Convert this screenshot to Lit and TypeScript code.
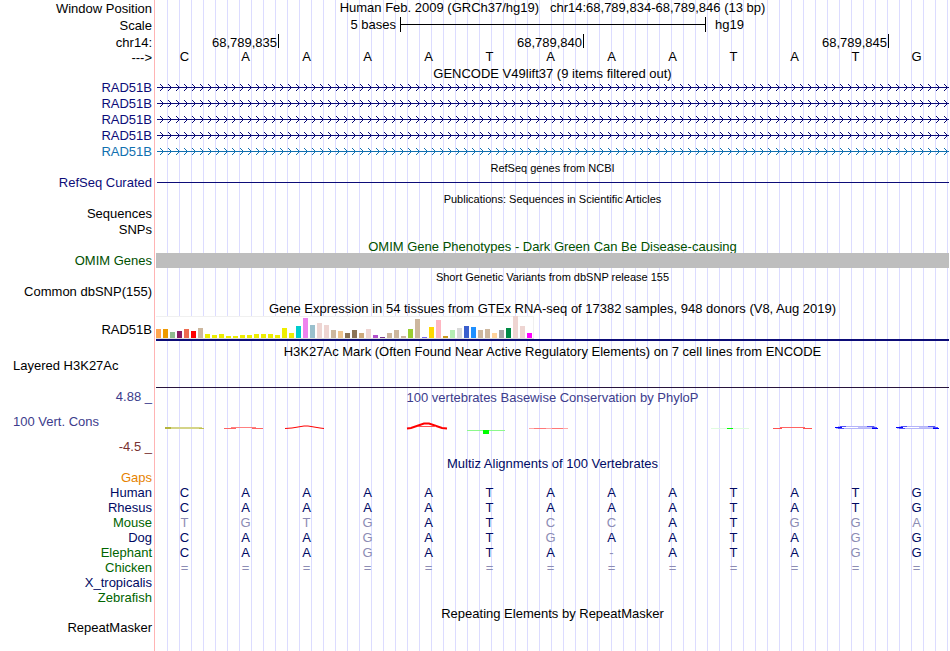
import { LitElement, html, svg, css, nothing, TemplateResult } from "lit";
import { customElement } from "lit/decorators.js";
import { classMap } from "lit/directives/class-map.js";
import { styleMap } from "lit/directives/style-map.js";

const REFERENCE = "CAAAATAAATATG";

const ALIGNMENTS: { name: string; tone: string; bases: string }[] = [
  { name: "Human", tone: "deep", bases: "CAAAATAAATATG" },
  { name: "Rhesus", tone: "deep", bases: "CAAAATAAATATG" },
  { name: "Mouse", tone: "green", bases: "TGTGATCCATGGA" },
  { name: "Dog", tone: "deep", bases: "CAAGATGAATAGG" },
  { name: "Elephant", tone: "green", bases: "CAAGATA-ATAGG" },
  { name: "Chicken", tone: "green", bases: "=============" },
  { name: "X_tropicalis", tone: "deep", bases: "" },
  { name: "Zebrafish", tone: "green", bases: "" },
];

/* Median expression per tissue: bar height and tissue colour. */
const TISSUES: [number, string][] = [
  [9, "#ffa54f"], [9, "#ee9a00"], [6, "#8fbc8f"], [7, "#8b1c62"], [9, "#ee6a50"],
  [7, "#ff0000"], [10, "#cdb79e"], [4, "#eeee00"], [3, "#eeee00"], [4, "#eeee00"],
  [2, "#eeee00"], [2, "#eeee00"], [3, "#eeee00"], [3, "#eeee00"], [4, "#eeee00"],
  [4, "#eeee00"], [4, "#eeee00"], [3, "#eeee00"], [10, "#eeee00"], [5, "#eeee00"],
  [12, "#00cdcd"], [20, "#ee82ee"], [13, "#9ac0cd"], [15, "#eed5d2"], [13, "#eed5d2"],
  [8, "#cdb79e"], [7, "#eec591"], [5, "#8b7355"], [8, "#8b7355"], [5, "#cdaa7d"],
  [9, "#eed5d2"], [3, "#b452cd"], [1, "#7a378b"], [5, "#cdb79e"], [8, "#cdb79e"],
  [2, "#cdb79e"], [9, "#9acd32"], [19, "#cdb79e"], [1, "#7a67ee"], [11, "#ffd700"],
  [18, "#ffb6c1"], [2, "#cd9b1d"], [8, "#b4eeb4"], [10, "#d9d9d9"], [12, "#3a5fcd"],
  [11, "#1e90ff"], [8, "#cdb79e"], [9, "#cdb79e"], [5, "#ffd39b"], [8, "#a6a6a6"],
  [10, "#008b45"], [22, "#eed5d2"], [12, "#eed5d2"], [5, "#ff00ff"],
];

const FLAT_G = svg`
  <rect x="11" y="22" width="37" height="1" fill="#b4b4fa"/>
  <rect x="13" y="22" width="6" height="1" fill="#5050f8"/>
  <rect x="40" y="22" width="7" height="1" fill="#5050f8"/>
  <rect x="8" y="23" width="7" height="1" fill="#0000ff"/>
  <rect x="15" y="23" width="16" height="1" fill="#ffffff"/>
  <rect x="31" y="23" width="14" height="1" fill="#c4c4fa"/>
  <rect x="45" y="23" width="5" height="1" fill="#5050f8"/>
  <rect x="9" y="24" width="36" height="1" fill="#b4b4fa"/>
  <rect x="11" y="24" width="6" height="1" fill="#5050f8"/>
  <rect x="45" y="24" width="6" height="1" fill="#0000ff"/>`;

/* Letter shapes squashed to their conservation score, one per base. */
const CONSERVATION: Record<number, TemplateResult> = {
  0: svg`
    <rect x="10" y="23" width="36" height="1" fill="#d4d488"/>
    <rect x="10" y="24" width="38" height="1" fill="#d4d488"/>
    <rect x="9" y="23" width="6" height="2" fill="#b4b43c"/>
    <rect x="43" y="24" width="5" height="1" fill="#c0c050"/>`,
  1: svg`
    <rect x="7" y="24" width="12" height="1" fill="#ff6464"/>
    <rect x="14" y="23" width="25" height="1" fill="#ff8080"/>
    <rect x="35" y="24" width="11" height="1" fill="#ff6464"/>`,
  2: svg`<path d="M7 24.5 L14 24 L26 22 L30 22 L42 24 L46 24.5" fill="none" stroke="#ff0000"/>`,
  4: svg`
    <path d="M7 24.5 L11 24 L24 19.5 L29 19.5 L42 24 L47 24.5" fill="none" stroke="#ff0000" stroke-width="2"/>
    <path d="M18 22.5 H36" stroke="#ff5050"/>`,
  5: svg`
    <rect x="6" y="26" width="38" height="1" fill="#8cf88c"/>
    <rect x="22" y="26" width="6" height="4" fill="#00ff00"/>`,
  6: svg`
    <rect x="7" y="24" width="39" height="1" fill="#ffa8a8"/>
    <rect x="12" y="24" width="12" height="1" fill="#ff7878"/>
    <rect x="30" y="24" width="11" height="1" fill="#ff7878"/>`,
  9: svg`
    <rect x="6" y="24" width="38" height="1" fill="#e0fbe0"/>
    <rect x="22" y="24" width="6" height="1" fill="#00ff00"/>`,
  10: svg`
    <rect x="7" y="24" width="9" height="1" fill="#ff5050"/>
    <rect x="14" y="23" width="25" height="1" fill="#ff6464"/>
    <rect x="37" y="24" width="9" height="1" fill="#ff5050"/>`,
  11: FLAT_G,
  12: FLAT_G,
};

@customElement("app-root")
export class AppRoot extends LitElement {
  static styles = css`
    :host {
      display: block;
      font: 13px/15px "Liberation Sans", Arial, Helvetica, sans-serif;
      color: #000;
    }
    .board {
      min-height: 100vh;
      box-sizing: border-box;
      padding-right: 1px;
      overflow: hidden;
      background:
        linear-gradient(to right, #fff 154px, #ffb4b4 154px, #ffb4b4 155px, #fff 155px) 0 0 / 156px 100% no-repeat,
        linear-gradient(to right, #dcdcff 1px, transparent 1px) 167px 0 / 12px 100%;
    }
    .row {
      display: grid;
      grid-template-columns: 152px minmax(0, 1fr);
      column-gap: 4px;
      height: 16px;
    }
    .row.h15 { height: 15px; }
    .row.h17 { height: 17px; }
    .label { text-align: right; white-space: pre; }
    .label.low, .low { line-height: 17px; }
    .label.start { text-align: left; padding-left: 13px; }
    .title { text-align: center; white-space: pre; }
    .title.band { line-height: 17px; }
    .title.small { font-size: 11px; line-height: 17px; }

    .navy { color: #0c0c78; }
    .deep { color: #000a64; }
    .sky { color: #1070b0; }
    .green { color: #006400; }
    .forest { color: #005000; }
    .orange { color: #e68200; }
    .indigo { color: #3c3c8c; }
    .maroon { color: #783232; }

    .scale { display: grid; grid-template-columns: 4fr 5fr 4fr; }
    .scale-from { text-align: right; padding-right: 4px; }
    .scale-to { padding-left: 10px; }
    .ruler {
      display: flex;
      align-items: center;
      height: 15px;
      margin-right: -1px;
      border: solid #000;
      border-width: 0 1px;
    }
    .ruler-line { flex: 1; height: 1px; background: #000; }

    .ticks { display: grid; grid-template-columns: 2fr 5fr 5fr 1fr; line-height: 17px; }
    .tick {
      text-align: right;
      height: 14px;
      margin-right: -1px;
      padding-right: 1px;
      border-right: 1px solid #000;
    }

    .bases { display: grid; grid-template-columns: repeat(13, 1fr); text-align: center; }
    .base { padding-right: 4px; }
    .base.differs { color: #8c8cb4; }

    .transcript { display: block; width: 100%; height: 15px; }
    .solid { height: 1px; margin: 7px 0 0 1px; background: #0c0c78; }
    .omim { height: 15px; background: #bebebe; }

    .gtex { height: 27px; }
    .gtex .label { align-self: center; }
    .gtex-plot { height: 25px; box-sizing: border-box; border-bottom: 2px solid #0c0c78; }
    .gtex-bars {
      display: inline-flex;
      align-items: flex-end;
      gap: 2px;
      height: 23px;
      padding-right: 2px;
      box-sizing: border-box;
      vertical-align: top;
      background: #fff;
      border-bottom: 1px solid #dcdcdc;
      box-shadow: inset -1px 1px #f0f0f0;
    }
    .gtex-bar { width: 5px; }

    .marks { height: 31px; }
    .marks-plot { height: 29px; border-bottom: 1px solid #28143c; }

    .cons { height: 51px; }
    .cons-labels { display: flex; flex-direction: column; gap: 10px; padding-top: 10px; }
    .cons-plot { display: grid; grid-template-columns: repeat(13, 1fr); }
    .cons-plot svg { display: block; width: 61px; height: 51px; }
  `;

  private row(label: unknown, data: unknown, rowClass = "", labelClass = "") {
    return html`<div class="row ${rowClass}">
      <div class="label ${labelClass}">${label}</div>
      ${data}
    </div>`;
  }

  private title(text: string, kind = "band", tone = "", rowClass = "h15") {
    return this.row("", html`<div class="title ${kind} ${tone}">${text}</div>`, rowClass);
  }

  private bases(sequence: string) {
    return html`<div class="bases deep">
      ${[...sequence].map(
        (base, i) => html`<span class=${classMap({ base: true, differs: base !== REFERENCE[i] })}>${base}</span>`
      )}
    </div>`;
  }

  private transcript(id: string, tone: string) {
    return this.row(
      "RAD51B",
      html`<svg class="transcript ${tone}" shape-rendering="crispEdges" aria-hidden="true">
        <defs>
          <pattern id=${id} x="3" y="0" width="8" height="15" patternUnits="userSpaceOnUse">
            <path
              d="M1 4h1v1h-1z M2 5h1v1h-1z M3 6h1v1h-1z M3 8h1v1h-1z M2 9h1v1h-1z M1 10h1v1h-1z"
              fill="currentColor"
            />
          </pattern>
        </defs>
        <rect x="1" y="0" width="100%" height="15" fill="url(#${id})" />
        <rect x="1" y="7" width="100%" height="1" fill="currentColor" />
      </svg>`,
      "",
      tone
    );
  }

  render() {
    return html`
      <main class="board">
        ${this.row(
          "Window Position",
          html`<div class="title">Human Feb. 2009 (GRCh37/hg19)   chr14:68,789,834-68,789,846 (13 bp)</div>`,
          "h17",
          "low"
        )}
        ${this.row(
          "Scale",
          html`<div class="scale">
            <span class="scale-from">5 bases</span>
            <span class="ruler"><span class="ruler-line"></span></span>
            <span class="scale-to">hg19</span>
          </div>`,
          "h17",
          "low"
        )}
        ${this.row(
          "chr14:",
          html`<div class="ticks">
            <span class="tick">68,789,835</span>
            <span class="tick">68,789,840</span>
            <span class="tick">68,789,845</span>
          </div>`,
          "h15",
          "low"
        )}
        ${this.row(
          "--->",
          html`<div class="bases">${[...REFERENCE].map((b) => html`<span class="base">${b}</span>`)}</div>`,
          "",
          "low"
        )}
        ${this.title("GENCODE V49lift37 (9 items filtered out)")}
        ${["navy", "navy", "navy", "navy", "sky"].map((tone, i) => this.transcript(`arrows-${i}`, tone))}
        ${this.title("RefSeq genes from NCBI", "small")}
        ${this.row("RefSeq Curated", html`<div class="solid"></div>`, "", "navy")}
        ${this.title("Publications: Sequences in Scientific Articles", "small")}
        ${this.row("Sequences", nothing)}
        ${this.row("SNPs", nothing)}
        ${this.title("OMIM Gene Phenotypes - Dark Green Can Be Disease-causing", "band", "forest")}
        ${this.row("OMIM Genes", html`<div class="omim"></div>`, "", "forest")}
        ${this.title("Short Genetic Variants from dbSNP release 155", "small")}
        ${this.row("Common dbSNP(155)", nothing)}
        ${this.title(
          "Gene Expression in 54 tissues from GTEx RNA-seq of 17382 samples, 948 donors (V8, Aug 2019)",
          "band",
          "",
          ""
        )}
        ${this.row(
          "RAD51B",
          html`<div class="gtex-plot">
            <div class="gtex-bars">
              ${TISSUES.map(
                ([height, color]) =>
                  html`<span class="gtex-bar" style=${styleMap({ height: `${height}px`, background: color })}></span>`
              )}
            </div>
          </div>`,
          "gtex"
        )}
        ${this.title("H3K27Ac Mark (Often Found Near Active Regulatory Elements) on 7 cell lines from ENCODE")}
        ${this.row("Layered H3K27Ac", html`<div class="marks-plot"></div>`, "marks", "start")}
        ${this.row(
          "4.88 _",
          html`<div class="title band indigo">100 vertebrates Basewise Conservation by PhyloP</div>`,
          "h15",
          "indigo"
        )}
        <div class="row cons">
          <div class="cons-labels">
            <div class="label start indigo">100 Vert. Cons</div>
            <div class="label maroon">-4.5 _</div>
          </div>
          <div class="cons-plot">
            ${[...REFERENCE].map(
              (_, i) => html`<svg viewBox="0 0 61 51" aria-hidden="true">${CONSERVATION[i] ?? nothing}</svg>`
            )}
          </div>
        </div>
        ${this.title("Multiz Alignments of 100 Vertebrates", "band", "deep")}
        ${this.row("Gaps", nothing, "h15", "orange")}
        ${ALIGNMENTS.map((a) => this.row(a.name, this.bases(a.bases), "h15", a.tone))}
        ${this.title("Repeating Elements by RepeatMasker")}
        ${this.row("RepeatMasker", nothing)}
      </main>
    `;
  }
}
